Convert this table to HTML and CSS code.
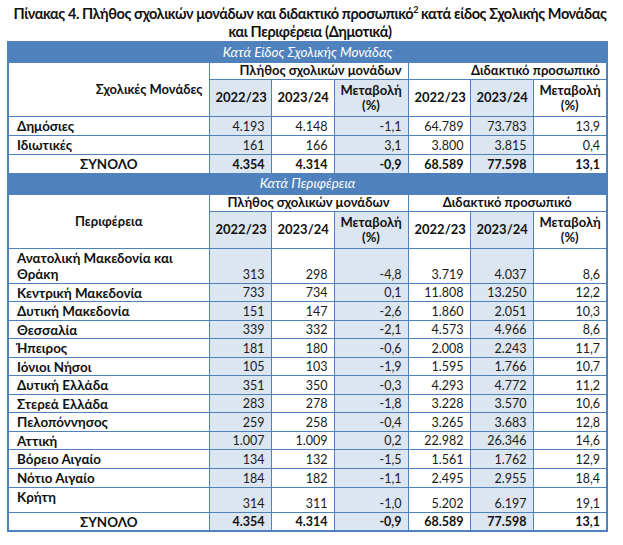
FILE: index.html
```html
<!DOCTYPE html>
<html lang="el">
<head>
<meta charset="utf-8">
<link rel="stylesheet" href="styles.css">
</head>
<body>
<div class="page">
  <h1 class="title">Πίνακας 4. Πλήθος σχολικών μονάδων και διδακτικό προσωπικό<sup>2</sup> κατά είδος Σχολικής Μονάδας<br>και Περιφέρεια (Δημοτικά)</h1>
  <table class="stats">
    <colgroup>
      <col class="c-label"><col class="c-y1"><col class="c-y2"><col class="c-ch"><col class="c-y1"><col class="c-y2"><col class="c-ch">
    </colgroup>
    <tbody>
      <tr class="band"><td colspan="7">Κατά Είδος Σχολικής Μονάδας</td></tr>
      <tr class="h1">
        <th rowspan="2" class="lbl-head right">Σχολικές Μονάδες</th>
        <th colspan="3" class="right">Πλήθος σχολικών μονάδων</th>
        <th colspan="3" class="right">Διδακτικό προσωπικό</th>
      </tr>
      <tr class="h2">
        <th class="sh">2022/23</th><th>2023/24</th><th class="sh">Μεταβολή<br>(%)</th>
        <th>2022/23</th><th class="sh">2023/24</th><th>Μεταβολή<br>(%)</th>
      </tr>
      <tr class="row"><td class="lbl">Δημόσιες</td><td class="sh">4.193</td><td>4.148</td><td class="sh">-1,1</td><td>64.789</td><td class="sh">73.783</td><td>13,9</td></tr>
      <tr class="row"><td class="lbl">Ιδιωτικές</td><td class="sh">161</td><td>166</td><td class="sh">3,1</td><td>3.800</td><td class="sh">3.815</td><td>0,4</td></tr>
      <tr class="row total"><td class="lbl">ΣΥΝΟΛΟ</td><td class="sh">4.354</td><td>4.314</td><td class="sh">-0,9</td><td>68.589</td><td class="sh">77.598</td><td>13,1</td></tr>

      <tr class="band band2"><td colspan="7">Κατά Περιφέρεια</td></tr>
      <tr class="h1">
        <th rowspan="2" class="lbl-head">Περιφέρεια</th>
        <th colspan="3">Πλήθος σχολικών μονάδων</th>
        <th colspan="3">Διδακτικό προσωπικό</th>
      </tr>
      <tr class="h2">
        <th class="sh">2022/23</th><th>2023/24</th><th class="sh">Μεταβολή<br>(%)</th>
        <th>2022/23</th><th class="sh">2023/24</th><th>Μεταβολή<br>(%)</th>
      </tr>
      <tr class="row tall"><td class="lbl">Ανατολική Μακεδονία και Θράκη</td><td class="sh">313</td><td>298</td><td class="sh">-4,8</td><td>3.719</td><td class="sh">4.037</td><td>8,6</td></tr>
      <tr class="row r"><td class="lbl">Κεντρική Μακεδονία</td><td class="sh">733</td><td>734</td><td class="sh">0,1</td><td>11.808</td><td class="sh">13.250</td><td>12,2</td></tr>
      <tr class="row r"><td class="lbl">Δυτική Μακεδονία</td><td class="sh">151</td><td>147</td><td class="sh">-2,6</td><td>1.860</td><td class="sh">2.051</td><td>10,3</td></tr>
      <tr class="row r"><td class="lbl">Θεσσαλία</td><td class="sh">339</td><td>332</td><td class="sh">-2,1</td><td>4.573</td><td class="sh">4.966</td><td>8,6</td></tr>
      <tr class="row r"><td class="lbl">Ήπειρος</td><td class="sh">181</td><td>180</td><td class="sh">-0,6</td><td>2.008</td><td class="sh">2.243</td><td>11,7</td></tr>
      <tr class="row r"><td class="lbl">Ιόνιοι Νήσοι</td><td class="sh">105</td><td>103</td><td class="sh">-1,9</td><td>1.595</td><td class="sh">1.766</td><td>10,7</td></tr>
      <tr class="row r"><td class="lbl">Δυτική Ελλάδα</td><td class="sh">351</td><td>350</td><td class="sh">-0,3</td><td>4.293</td><td class="sh">4.772</td><td>11,2</td></tr>
      <tr class="row r"><td class="lbl">Στερεά Ελλάδα</td><td class="sh">283</td><td>278</td><td class="sh">-1,8</td><td>3.228</td><td class="sh">3.570</td><td>10,6</td></tr>
      <tr class="row r"><td class="lbl">Πελοπόννησος</td><td class="sh">259</td><td>258</td><td class="sh">-0,4</td><td>3.265</td><td class="sh">3.683</td><td>12,8</td></tr>
      <tr class="row r"><td class="lbl">Αττική</td><td class="sh">1.007</td><td>1.009</td><td class="sh">0,2</td><td>22.982</td><td class="sh">26.346</td><td>14,6</td></tr>
      <tr class="row r"><td class="lbl">Βόρειο Αιγαίο</td><td class="sh">134</td><td>132</td><td class="sh">-1,5</td><td>1.561</td><td class="sh">1.762</td><td>12,9</td></tr>
      <tr class="row r"><td class="lbl">Νότιο Αιγαίο</td><td class="sh">184</td><td>182</td><td class="sh">-1,1</td><td>2.495</td><td class="sh">2.955</td><td>18,4</td></tr>
      <tr class="row crete"><td class="lbl">Κρήτη</td><td class="sh">314</td><td>311</td><td class="sh">-1,0</td><td>5.202</td><td class="sh">6.197</td><td>19,1</td></tr>
      <tr class="row total"><td class="lbl">ΣΥΝΟΛΟ</td><td class="sh">4.354</td><td>4.314</td><td class="sh">-0,9</td><td>68.589</td><td class="sh">77.598</td><td>13,1</td></tr>
    </tbody>
  </table>
</div>
</body>
</html>
```

FILE: styles.css
```css
html, body {
  margin: 0;
  padding: 0;
  background: #ffffff;
}

body {
  font-family: Lato, "Noto Sans", "Liberation Sans", sans-serif;
  color: #000000;
}

.page {
  padding: 5px 0 0 7px;
  width: 598px;
}

.title {
  margin: 0 0 0 -2px;
  width: 610px;
  font-size: 14.5px;
  line-height: 18px;
  font-weight: 700;
  letter-spacing: -0.4px;
  text-align: center;
  color: #111111;
  white-space: nowrap;
}

.title sup {
  font-size: 9px;
  line-height: 0;
  vertical-align: 6px;
}

.stats {
  width: 598px;
  border-collapse: collapse;
  table-layout: fixed;
  border: 2px solid #4f81bd;
  font-size: 12.5px;
}

.c-label { width: 201px; }
.c-y1 { width: 62px; }
.c-y2 { width: 63px; }
.c-ch { width: 74px; }

.stats td,
.stats th {
  border: 1px solid #4f81bd;
  padding: 0 6px;
  line-height: 15px;
  box-sizing: border-box;
}

.band td {
  height: 20px;
  background: #4f81bd;
  color: #ffffff;
  font-style: italic;
  font-size: 13.5px;
  text-align: center;
  padding: 0;
}

.band2 td { height: 21px; }

.stats th {
  font-weight: 700;
  font-size: 13px;
  text-align: center;
  vertical-align: middle;
  color: #111111;
}

.h1 th { height: 17px; }
.h2 th { height: 37px; }

.stats th.right { text-align: right; }

.sh { background: #dce6f1; }

.row td {
  height: 19px;
  text-align: right;
  vertical-align: bottom;
  color: #1a1a1a;
  padding-bottom: 1px;
}

.row.r td { height: 18.55px; }
.row.tall td { height: 35px; }
.row.crete td { height: 25px; }

.row td.lbl {
  text-align: left;
  font-weight: 700;
  font-size: 13.4px;
  line-height: 16px;
  vertical-align: top;
  padding: 1px 8px 0;
  color: #111111;
}

.row.total td {
  font-weight: 700;
  color: #111111;
}

.row.total td.lbl {
  text-align: center;
}
```
